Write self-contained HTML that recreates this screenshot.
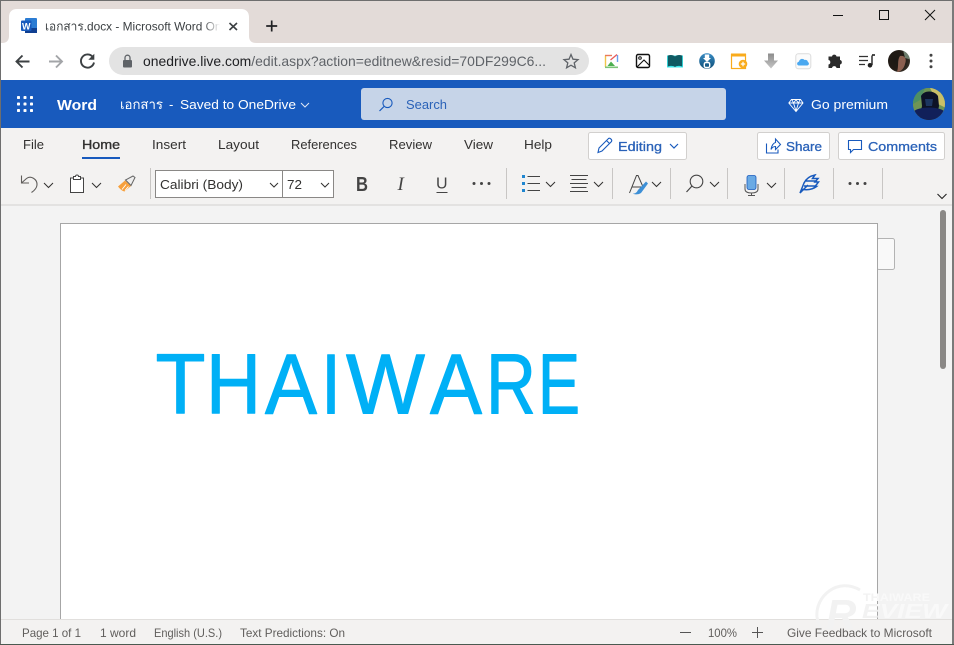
<!DOCTYPE html>
<html lang="en"><head><meta charset="utf-8"><title>เอกสาร.docx - Microsoft Word Online</title>
<style>
html,body{margin:0;padding:0;width:954px;height:645px;overflow:hidden;background:#f3f3f3}
svg{display:block;position:absolute;left:0;top:0}
text{font-family:"Liberation Sans","Noto Sans CJK SC",sans-serif;white-space:pre}
.t{font-size:13px;fill:#323130}
.s{font-size:12px;fill:#605e5c}
.sb{font-size:13px;fill:#2a62b8;stroke:#2a62b8;stroke-width:.3}
.ln{fill:none;stroke:#323130;stroke-width:1.1}
.ch{fill:none;stroke:#323130;stroke-width:1}
.bl{fill:none;stroke:#185abd;stroke-width:1.2}
.big{font-size:85px;fill:#00b0f6;stroke:#00b0f6;stroke-width:1.1;stroke-linejoin:round}
</style></head><body>
<svg width="954" height="645" viewBox="0 0 954 645" xmlns="http://www.w3.org/2000/svg">
<defs>
<linearGradient id="fade" x1="0" x2="1"><stop offset="0" stop-color="#fff" stop-opacity="0"/><stop offset="1" stop-color="#fff"/></linearGradient>
<radialGradient id="av1" cx=".35" cy=".45" r=".7"><stop offset="0" stop-color="#1c1814"/><stop offset=".6" stop-color="#221b15"/><stop offset="1" stop-color="#3b342a"/></radialGradient>
<linearGradient id="arr" x1="0" x2="0" y1="0" y2="1"><stop offset="0" stop-color="#8d8d8d"/><stop offset="1" stop-color="#c4c4c4"/></linearGradient>
<linearGradient id="glb" x1="0" x2="0" y1="0" y2="1"><stop offset="0" stop-color="#3a8cc4"/><stop offset="1" stop-color="#0c4e78"/></linearGradient>
<linearGradient id="wm" gradientUnits="userSpaceOnUse" x1="810" x2="950" y1="0" y2="0"><stop offset="0" stop-color="#f2f2f2"/><stop offset=".478" stop-color="#f2f2f2"/><stop offset=".479" stop-color="#f9f9f9"/><stop offset="1" stop-color="#f9f9f9"/></linearGradient>
<clipPath id="tabclip"><rect x="45" y="14" width="175" height="24"/></clipPath>
<clipPath id="avc"><circle cx="929" cy="104" r="16"/></clipPath>
<clipPath id="avp"><circle cx="899" cy="61" r="11"/></clipPath>
</defs>

<!-- window frame / title bar -->
<rect width="954" height="645" fill="#f3f3f3"/>
<rect x="0" y="0" width="954" height="44" fill="#e3dbd8"/>
<path d="M1 43H2C6 43 9 41 9 36V17C9 12 12 9 17 9H241C246 9 249 12 249 17V36C249 41 252 43 256 43H954V44H1Z" fill="#fff"/>
<!-- word icon -->
<rect x="25" y="18" width="12" height="15" rx="1" fill="#2b7cd3"/>
<rect x="25" y="28" width="12" height="5" fill="#103f91"/>
<rect x="21" y="20.500" width="10.500" height="10.500" rx="1" fill="#185abd"/>
<text x="22" y="29.300" font-size="9" font-weight="700" style="fill:#fff" textLength="8.500" lengthAdjust="spacingAndGlyphs">W</text>
<g clip-path="url(#tabclip)"><text x="45" y="30.500" font-size="12" style="fill:#3c4043" textLength="195" lengthAdjust="spacingAndGlyphs">เอกสาร.docx - Microsoft Word Online</text></g>
<rect x="203" y="14" width="17" height="24" fill="url(#fade)"/>
<path d="M229.500 23L237 30M237 23L229.500 30" stroke="#3c4043" stroke-width="1.600" fill="none"/>
<path d="M271.700 20.500V31.500M266.200 26H277.200" stroke="#202124" stroke-width="1.700" fill="none"/>
<!-- window controls -->
<path d="M833 15.500H843" stroke="#111" stroke-width="1"/>
<rect x="879.500" y="10.500" width="9" height="9" fill="none" stroke="#111" stroke-width="1"/>
<path d="M925 10L935 20M935 10L925 20" stroke="#111" stroke-width="1" fill="none"/>

<!-- toolbar -->
<rect x="0" y="43" width="954" height="37" fill="#fff"/>
<path d="M29.500 61.500H17M22.500 55.500L16.500 61.500L22.500 67.500" fill="none" stroke="#3c4043" stroke-width="1.900"/>
<path d="M49 61.500H61.500M56 55.500L62 61.500L56 67.500" fill="none" stroke="#a3a5a8" stroke-width="1.900"/>
<path d="M92.600 56.800A6.600 6.600 0 1 0 94 62.500" fill="none" stroke="#3c4043" stroke-width="1.900"/>
<path d="M94.300 53.800V59.800H88.300Z" fill="#3c4043"/>
<rect x="109" y="47" width="480" height="28" rx="14" fill="#e3e3e3"/>
<rect x="123" y="60" width="9" height="7.500" rx="1" fill="#5f6368"/>
<path d="M125 60V57.700A2.500 2.500 0 0 1 130 57.700V60" fill="none" stroke="#5f6368" stroke-width="1.300"/>
<text x="143" y="66" font-size="14" textLength="403" lengthAdjust="spacingAndGlyphs"><tspan style="fill:#202124">onedrive.live.com</tspan><tspan style="fill:#5f6368">/edit.aspx?action=editnew&amp;resid=70DF299C6...</tspan></text>
<path d="M571 54.500L573 59.200L578 59.600L574.200 62.900L575.400 67.800L571 65.200L566.600 67.800L567.800 62.900L564 59.600L569 59.200Z" fill="none" stroke="#5f6368" stroke-width="1.300"/>

<!-- extensions -->
<rect x="605.500" y="55" width="12" height="12.500" fill="#fff"/>
<path d="M605.500 67V55.500" stroke="#f1c64b" stroke-width="1.400"/>
<path d="M605 55.500H612" stroke="#ea7a5a" stroke-width="1.400"/>
<path d="M617.500 55V62" stroke="#6a9ef0" stroke-width="1.400"/>
<path d="M605 67.300H618" stroke="#7cc47a" stroke-width="1.600"/>
<path d="M607.500 66L611 61.500L615 66Z" fill="#4caf50"/>
<path d="M610.500 60L617 54.500" stroke="#e85a5a" stroke-width="1.300"/>
<rect x="636.500" y="54.500" width="13" height="13" rx="1.500" fill="#fff" stroke="#111" stroke-width="1.400"/>
<circle cx="640" cy="58" r="1.300" fill="none" stroke="#111"/><path d="M637 67L644 60L649.500 65.500" fill="none" stroke="#111" stroke-width="1.100"/>
<rect x="667" y="55.500" width="16" height="12" fill="#3ee8ec"/>
<path d="M667.800 55.500C671 54.500 673.500 55 675 56.500C676.500 55 679 54.500 682.200 55.500V66.500C679 65.500 676.500 65.800 675 67C673.500 65.800 671 65.500 667.800 66.500Z" fill="#0f5a63"/>
<circle cx="707" cy="61" r="7.800" fill="url(#glb)"/>
<path d="M704.800 54.500H709.200V58H711L707 62L703 58H704.800Z" fill="#fff"/><rect x="704.300" y="62.500" width="5.400" height="5" rx="1.500" fill="none" stroke="#fff" stroke-width="1.400"/>
<rect x="731.500" y="54.500" width="14" height="14" fill="#fff" stroke="#f9ab1c" stroke-width="1.200"/>
<rect x="731" y="53.500" width="15" height="3" fill="#f9ab1c"/>
<circle cx="743" cy="64" r="4.300" fill="#f9ab1c"/><path d="M740.800 64H745.200M743 61.800V66.200" stroke="#fff" stroke-width="1.200"/>
<path d="M768 53.500H774V60.500H778L771 68.500L764 60.500H768Z" fill="url(#arr)"/>
<rect x="795.800" y="53.800" width="15" height="15" rx="2.500" fill="#fbfbfb" stroke="#dcdcdc"/>
<path d="M799 65.500C796.500 65.500 796.500 62 799 61.600C799.500 58.800 803 58 804.500 60C806.500 59.400 808 60.800 807.800 62C809.600 62.600 809.200 65.500 807 65.500Z" fill="#4aa8f0"/>
<path d="M828.500 56.500H832A2.300 2.300 0 0 1 836.500 56.500H840V60A2.300 2.300 0 0 1 840 64.500V68H836.500A2.300 2.300 0 0 0 832 68H828.500V64.500A2.300 2.300 0 0 0 828.500 60Z" fill="#2b2b2b"/>
<path d="M859 56.500H868M859 60.500H868M859 64.500H865" stroke="#333" stroke-width="1.300" fill="none"/>
<path d="M872 55.500V65" stroke="#222" stroke-width="1.400"/><path d="M872 55H875" stroke="#222" stroke-width="1.600"/><circle cx="870" cy="65.300" r="2.300" fill="#222"/>
<circle cx="899" cy="61" r="11" fill="url(#av1)"/>
<g clip-path="url(#avp)">
<path d="M903 50H912V60L905 58Z" fill="#6d7d6c"/>
<path d="M900 56C905 55 907 59 905 64C904 69 900 72 897 72C899 66 897 60 900 56Z" fill="#8c6050"/>
</g>
<circle cx="931" cy="55.300" r="1.500" fill="#444"/><circle cx="931" cy="61" r="1.500" fill="#444"/><circle cx="931" cy="66.700" r="1.500" fill="#444"/>

<!-- app header -->
<rect x="0" y="80" width="954" height="48" fill="#185abd"/>
<g fill="#fff">
<rect x="17" y="96" width="3" height="3" rx=".8"/><rect x="23.500" y="96" width="3" height="3" rx=".8"/><rect x="30" y="96" width="3" height="3" rx=".8"/>
<rect x="17" y="102.500" width="3" height="3" rx=".8"/><rect x="23.500" y="102.500" width="3" height="3" rx=".8"/><rect x="30" y="102.500" width="3" height="3" rx=".8"/>
<rect x="17" y="109" width="3" height="3" rx=".8"/><rect x="23.500" y="109" width="3" height="3" rx=".8"/><rect x="30" y="109" width="3" height="3" rx=".8"/>
</g>
<text x="57" y="110" font-size="15" font-weight="700" style="fill:#fff" textLength="40" lengthAdjust="spacingAndGlyphs">Word</text>
<text x="120" y="109" font-size="13" style="fill:#fff" textLength="43" lengthAdjust="spacingAndGlyphs">เอกสาร</text>
<text x="169" y="109" font-size="13" style="fill:#fff">-</text>
<text x="180" y="109" font-size="13" style="fill:#fff" textLength="116" lengthAdjust="spacingAndGlyphs">Saved to OneDrive</text>
<path d="M301 103L305 107L309 103" fill="none" stroke="#dfe8f5" stroke-width="1"/>
<rect x="361" y="88" width="365" height="32" rx="3" fill="#c6d4e8"/>
<circle cx="387.500" cy="103" r="4.600" fill="none" stroke="#185abd" stroke-width="1.100"/><path d="M384 106.500L379.500 111" stroke="#185abd" stroke-width="1.200"/>
<text x="406" y="109" font-size="13" style="fill:#2a62b8" textLength="41" lengthAdjust="spacingAndGlyphs">Search</text>
<path d="M791.500 99.500H800.500L803 103L796 111.500L788.800 103ZM789 103H803M793.500 103L796 111M798.500 103L796 111M792 99.800L793.500 103L796 99.800L798.500 103L800 99.800" fill="none" stroke="#fff" stroke-width=".9"/>
<text x="811" y="109" font-size="13" style="fill:#fff" textLength="77" lengthAdjust="spacingAndGlyphs">Go premium</text>
<circle cx="929" cy="104" r="16" fill="#6f9455"/>
<g clip-path="url(#avc)">
<rect x="913" y="88" width="32" height="32" fill="#6f9455"/>
<path d="M930 88H946V108L938 104Z" fill="#c9bf68"/>
<path d="M913 88H925L920 100L913 104Z" fill="#4e8f63"/>
<path d="M921 96C924 90 934 90 938 96L939 106L936 120H919L922 106Z" fill="#0d1226"/>
<path d="M913 120V112C918 106 940 106 945 112V120Z" fill="#11205a"/>
<path d="M925 99H933L932 106H926Z" fill="#1c3560"/>
</g>

<!-- ribbon -->
<rect x="0" y="128" width="954" height="76" fill="#f3f2f1"/>
<rect x="0" y="204" width="954" height="2" fill="#e3e2e1"/>
<text class="t" x="23" y="149" textLength="21" lengthAdjust="spacingAndGlyphs">File</text>
<text class="t" x="82" y="149" style="stroke:#323130;stroke-width:.35" textLength="38" lengthAdjust="spacingAndGlyphs">Home</text>
<rect x="82" y="157" width="38" height="2" fill="#185abd"/>
<text class="t" x="152" y="149" textLength="34" lengthAdjust="spacingAndGlyphs">Insert</text>
<text class="t" x="218" y="149" textLength="41" lengthAdjust="spacingAndGlyphs">Layout</text>
<text class="t" x="291" y="149" textLength="66" lengthAdjust="spacingAndGlyphs">References</text>
<text class="t" x="389" y="149" textLength="43" lengthAdjust="spacingAndGlyphs">Review</text>
<text class="t" x="464" y="149" textLength="29" lengthAdjust="spacingAndGlyphs">View</text>
<text class="t" x="524" y="149" textLength="28" lengthAdjust="spacingAndGlyphs">Help</text>

<rect x="588.500" y="132.500" width="98" height="27" rx="2" fill="#fff" stroke="#d2d0ce"/>
<path d="M598 152.500L599 148L608.500 138.500C610 137.500 612.500 140 611.500 141.500L602 151Z M606.500 140.500L609.500 143.500" fill="none" stroke="#185abd" stroke-width="1.100"/>
<text class="sb" x="618" y="151" textLength="44" lengthAdjust="spacingAndGlyphs">Editing</text>
<path d="M670 144L674 148L678 144" class="bl"/>
<rect x="757.500" y="132.500" width="72" height="27" rx="2" fill="#fff" stroke="#d2d0ce"/>
<path d="M766.500 143.500V153H778V149.500M771 149.500C771.500 145.500 773.500 143 775.500 142.500V139L780.500 144.500L775.500 149.500V146.500C773.500 146.500 772 147.500 771 149.500Z" fill="none" stroke="#185abd" stroke-width="1.100"/>
<text class="sb" x="786" y="151" textLength="36" lengthAdjust="spacingAndGlyphs">Share</text>
<rect x="838.500" y="132.500" width="106" height="27" rx="2" fill="#fff" stroke="#d2d0ce"/>
<path d="M848.500 140.500H861.500V149.500H853.500L850.500 152.500V149.500H848.500Z" fill="none" stroke="#185abd" stroke-width="1.100"/>
<text class="sb" x="868" y="151" textLength="69" lengthAdjust="spacingAndGlyphs">Comments</text>

<!-- command bar -->
<path d="M21.500 175.500V183H29M21.500 183L26.500 178.500C31 175 37.500 179.500 37 185C36.700 188 34.500 190.500 31.500 192.500" fill="none" stroke="#605e5c" stroke-width="1.100"/>
<path d="M44 183L48.500 187.500L53 183" class="ch"/>
<path d="M73 178H70.500V192.500H83.500V178H81M73.500 176.500V179.500H80.500V176.500H78.500C78.500 174.500 75.500 174.500 75.500 176.500Z" fill="#fff" stroke="#444" stroke-width="1"/>
<path d="M92 183L96.500 187.500L101 183" class="ch"/>
<path d="M118 186.500L125 180.500L131 186L124.500 191.500C122 191 120 189 118 186.500Z" fill="#f7a03c"/>
<path d="M122 189.500L126 184.500M125 190.500L128.500 186.500" stroke="#fff" stroke-width=".9"/>
<path d="M125.500 180L131 185.500L135 177.500L133 176Z" fill="#eee" stroke="#666" stroke-width="1"/>
<path d="M150.500 168V199" stroke="#c8c6c4"/>
<rect x="155.500" y="170.500" width="178" height="27" fill="#fff" stroke="#8a8886"/>
<path d="M282.500 170V198" stroke="#8a8886"/>
<text class="t" x="160" y="189" textLength="83" lengthAdjust="spacingAndGlyphs">Calibri (Body)</text>
<path d="M270 183L274 187L278 183" class="ch"/>
<text class="t" x="287" y="189" textLength="15" lengthAdjust="spacingAndGlyphs">72</text>
<path d="M321 183L325 187L329 183" class="ch"/>
<text x="356" y="191" font-size="20" font-weight="700" style="fill:#444" textLength="12" lengthAdjust="spacingAndGlyphs">B</text>
<text x="397.500" y="190" font-size="19" font-style="italic" style="font-family:'Liberation Serif',serif;fill:#444">I</text>
<text x="436" y="188.500" font-size="16" style="fill:#444">U</text><path d="M436.500 192.500H447.500" stroke="#444"/>
<g fill="#444"><circle cx="474" cy="183.500" r="1.500"/><circle cx="481.500" cy="183.500" r="1.500"/><circle cx="489" cy="183.500" r="1.500"/></g>
<path d="M506.500 168V199" stroke="#c8c6c4"/>
<rect x="522" y="175" width="3" height="3" fill="#1f86d0"/><rect x="522" y="182" width="3" height="3" fill="#1f86d0"/><rect x="522" y="189" width="3" height="3" fill="#1f86d0"/>
<path d="M527.500 176.500H540M527.500 183.500H540M527.500 190.500H540" stroke="#444"/>
<path d="M546 182L550.500 186.500L555 182" class="ch"/>
<path d="M570 175.500H588M571.500 179.500H586.500M570 183.500H588M571.500 187.500H586.500M570 191.500H588" stroke="#444"/>
<path d="M594 182L598.500 186.500L603 182" class="ch"/>
<path d="M612.500 168V199" stroke="#c8c6c4"/>
<path d="M629.500 193L636.500 175.500H638L643.500 188M632 187H641" fill="none" stroke="#444" stroke-width="1"/>
<path d="M638 190L646 181.500L648 183.500L641 193C638 195 634 194.500 633 193.500C636 193.500 637 192 638 190Z" fill="#3d8fd6"/>
<path d="M652 182L656.500 186.500L661 182" class="ch"/>
<path d="M670.500 168V199" stroke="#c8c6c4"/>
<circle cx="696.500" cy="181.500" r="6.300" fill="none" stroke="#444" stroke-width="1.100"/><path d="M692 186L686.500 192" stroke="#444" stroke-width="1.200"/>
<path d="M710 182L714.500 186.500L719 182" class="ch"/>
<path d="M727.500 168V199" stroke="#c8c6c4"/>
<rect x="747" y="175.500" width="9" height="14" rx="2" fill="#6aaae4" stroke="#185abd" stroke-width=".8"/>
<path d="M745 184V189C745 192 748 193 751.500 193C755 193 758 192 758 189V184M751.500 193V195.500M748 195.500H755" fill="none" stroke="#555" stroke-width="1"/>
<path d="M767 183L771.500 187.500L776 183" class="ch"/>
<path d="M784.500 168V199" stroke="#c8c6c4"/>
<path d="M800 193L804 183C806 179 810 176 815 175L812.500 178.500H818L815 182H818.500L815 186.500H816.500C812 190 807 190 803 189.500ZM800 193L808 185M806 181H817M804 186H815" fill="none" stroke="#185abd" stroke-width="1.500"/>
<path d="M833.500 168V199" stroke="#c8c6c4"/>
<g fill="#444"><circle cx="850" cy="183.500" r="1.500"/><circle cx="857.500" cy="183.500" r="1.500"/><circle cx="865" cy="183.500" r="1.500"/></g>
<path d="M882.500 168V199" stroke="#c8c6c4"/>
<path d="M937.500 194L942 198.500L946.500 194" fill="none" stroke="#222" stroke-width="1.100"/>

<!-- document -->
<rect x="877" y="238.500" width="17.500" height="31" rx="2" fill="#f9f9f9" stroke="#b3b3b3"/>
<rect x="60.500" y="223.500" width="817" height="400" fill="#fff" stroke="#a6a6a6"/>
<text class="big" x="155.500" y="413.500" textLength="50" lengthAdjust="spacingAndGlyphs">T</text>
<text class="big" x="206" y="413.500" textLength="55" lengthAdjust="spacingAndGlyphs">H</text>
<text class="big" x="265" y="413.500" textLength="52" lengthAdjust="spacingAndGlyphs">A</text>
<text class="big" x="321" y="413.500" textLength="20" lengthAdjust="spacingAndGlyphs">I</text>
<text class="big" x="346" y="413.500" textLength="79" lengthAdjust="spacingAndGlyphs">W</text>
<text class="big" x="430" y="413.500" textLength="52" lengthAdjust="spacingAndGlyphs">A</text>
<text class="big" x="486" y="413.500" textLength="50" lengthAdjust="spacingAndGlyphs">R</text>
<text class="big" x="538" y="413.500" textLength="42" lengthAdjust="spacingAndGlyphs">E</text>

<!-- scrollbar -->
<rect x="940" y="210" width="6" height="159" rx="3" fill="#8a8886"/>

<!-- status bar -->
<rect x="0" y="619" width="954" height="26" fill="#f3f2f1"/>
<rect x="0" y="619" width="954" height="1" fill="#e1dfdd"/>

<!-- watermark -->
<g>
<path d="M860 590C838 577 815 596 817 617C818 625 821 631 826 636" fill="none" style="stroke:url(#wm)" stroke-width="3"/>
<text x="863" y="601" font-size="11" font-weight="700" style="fill:url(#wm)" textLength="67" lengthAdjust="spacingAndGlyphs">THAIWARE</text>
<text x="826" y="629" font-size="42" font-weight="700" font-style="italic" style="fill:url(#wm)">R</text>
<text x="862" y="618" font-size="20" font-weight="700" font-style="italic" style="fill:url(#wm)" textLength="85" lengthAdjust="spacingAndGlyphs">EVIEW</text>
</g>

<text class="s" x="22" y="637" textLength="59" lengthAdjust="spacingAndGlyphs">Page 1 of 1</text>
<text class="s" x="100" y="637" textLength="36" lengthAdjust="spacingAndGlyphs">1 word</text>
<text class="s" x="154" y="637" textLength="68" lengthAdjust="spacingAndGlyphs">English (U.S.)</text>
<text class="s" x="240" y="637" textLength="105" lengthAdjust="spacingAndGlyphs">Text Predictions: On</text>
<path d="M680 632.500H691M752 632.500H763M757.500 627V638" stroke="#555" stroke-width="1"/>
<text class="s" x="708" y="637" textLength="29" lengthAdjust="spacingAndGlyphs">100%</text>
<text class="s" x="787" y="637" textLength="145" lengthAdjust="spacingAndGlyphs">Give Feedback to Microsoft</text>

<!-- window border -->
<rect x="0" y="0" width="954" height="1" fill="#6e6e6e"/>
<rect x="0" y="0" width="1" height="645" fill="#6e6e6e"/>
<rect x="952" y="0" width="2" height="645" fill="#7a7a7a"/>
<rect x="0" y="644" width="954" height="1" fill="#4a5a50"/>
</svg>
</body></html>
